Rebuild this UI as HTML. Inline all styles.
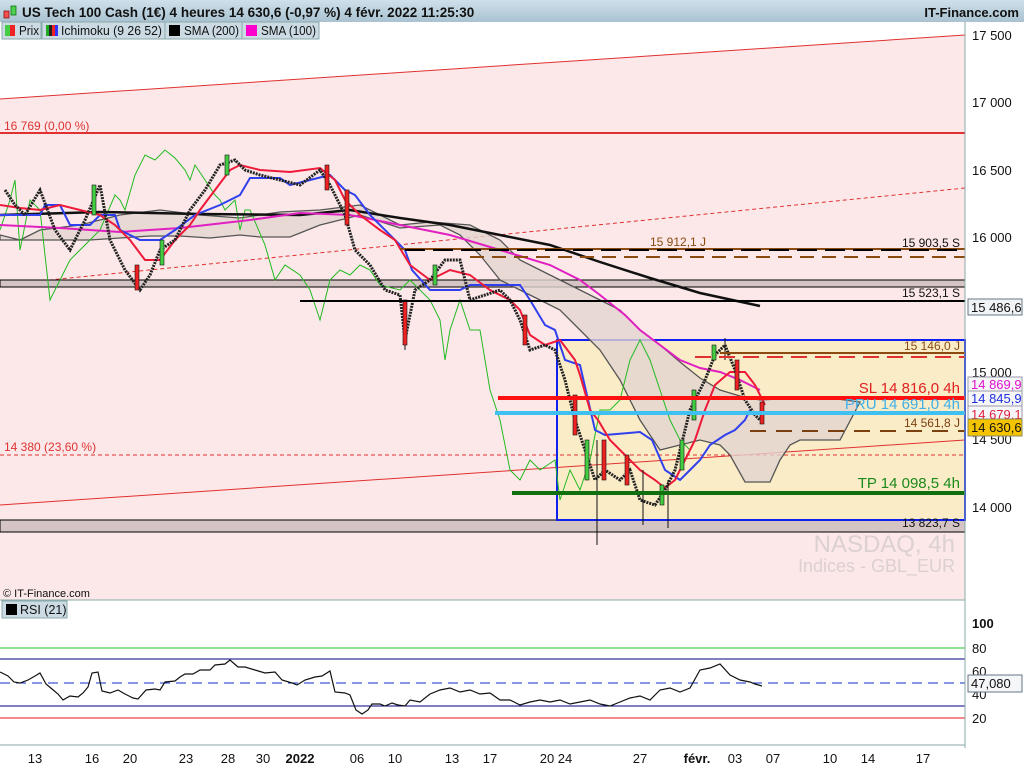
<!DOCTYPE html>
<html><head><meta charset="utf-8"><style>
body{margin:0;width:1024px;height:768px;overflow:hidden;background:#fff;font-family:"Liberation Sans",sans-serif}
svg{display:block}
text{font-family:"Liberation Sans",sans-serif}
</style></head><body>
<svg width="1024" height="768" viewBox="0 0 1024 768" xmlns="http://www.w3.org/2000/svg">
<defs><linearGradient id="hd" x1="0" y1="0" x2="0" y2="1"><stop offset="0" stop-color="#cfe0ea"/><stop offset="1" stop-color="#a9c2d1"/></linearGradient></defs>
<rect x="0" y="0" width="1024" height="22" fill="url(#hd)"/>
<rect x="4" y="11" width="5" height="7" fill="#f05050" stroke="#800" stroke-width="0.7"/>
<rect x="11" y="6" width="5" height="9" fill="#50d050" stroke="#060" stroke-width="0.7"/>
<text x="22" y="17" font-size="13.5" font-weight="bold" fill="#111">US Tech 100 Cash (1€) 4 heures 14 630,6 (-0,97 %) 4 févr. 2022 11:25:30</text>
<text x="1019" y="17" font-size="13" font-weight="bold" fill="#111" text-anchor="end">IT-Finance.com</text>
<rect x="0" y="22" width="965" height="578" fill="#fce8e8"/>
<polygon points="0,22 965,22 965,35 0,99" fill="#fff"/>
<rect x="557" y="340" width="408" height="180" fill="#fbecc8"/>
<g font-size="12.5" fill="#111">
<rect x="2" y="22" width="39" height="17" fill="#ccdbe3" stroke="#8aa"/>
<rect x="5" y="25" width="5" height="11" fill="#44cc44"/><rect x="10" y="25" width="5" height="11" fill="#ee2222"/><text x="19" y="35" textLength="20" lengthAdjust="spacingAndGlyphs">Prix</text>
<rect x="42" y="22" width="123" height="17" fill="#ccdbe3" stroke="#8aa"/>
<rect x="46" y="25" width="3" height="11" fill="#2a2"/><rect x="49" y="25" width="3" height="11" fill="#222"/><rect x="52" y="25" width="3" height="11" fill="#e22"/><rect x="55" y="25" width="3" height="11" fill="#33f"/><text x="61" y="35" textLength="101" lengthAdjust="spacingAndGlyphs">Ichimoku (9 26 52)</text>
<rect x="165" y="22" width="77" height="17" fill="#ccdbe3" stroke="#8aa"/>
<rect x="169" y="25" width="11" height="11" fill="#000"/><text x="184" y="35" textLength="55" lengthAdjust="spacingAndGlyphs">SMA (200)</text>
<rect x="242" y="22" width="77" height="17" fill="#ccdbe3" stroke="#8aa"/>
<rect x="246" y="25" width="11" height="11" fill="#f0c"/><text x="261" y="35" textLength="55" lengthAdjust="spacingAndGlyphs">SMA (100)</text>
</g>
<line x1="0" y1="99" x2="965" y2="35" stroke="#e03030"/>
<line x1="0" y1="505" x2="965" y2="440" stroke="#e03030"/>
<line x1="0" y1="285" x2="965" y2="188" stroke="#e03030" stroke-dasharray="4,3"/>
<line x1="0" y1="133" x2="965" y2="133" stroke="#e03030" stroke-width="2"/>
<text x="4" y="130" font-size="12" fill="#d33">16 769 (0,00 %)</text>
<line x1="0" y1="455" x2="965" y2="455" stroke="#e03030" stroke-dasharray="4,3"/>
<text x="4" y="451" font-size="12" fill="#d33">14 380 (23,60 %)</text>
<rect x="0" y="280" width="965" height="7" fill="#d4c4c4" stroke="#000" stroke-width="1"/>
<rect x="0" y="520" width="965" height="12" fill="#d4c4c4" stroke="#000" stroke-width="1"/>
<rect x="557" y="340" width="408" height="180" fill="none" stroke="#1020ee" stroke-width="2"/>
<polygon points="0,235 20,240 40,230 80,225 120,215 160,210 200,215 240,218 280,212 320,210 360,205 400,225 430,222 470,225 500,240 520,260 540,270 560,280 580,290 600,300 620,310 640,330 660,345 680,362 700,378 720,390 740,396 760,400 800,398 830,398 860,402 840,440 800,440 790,445 780,460 770,482 745,482 730,455 720,445 700,440 680,445 660,450 640,420 620,380 600,350 580,330 560,310 540,300 520,290 500,280 480,255 460,235 440,225 400,228 360,215 320,225 290,237 260,237 240,235 210,238 180,236 150,236 120,238 90,240 60,240 30,240 0,240" fill="#e2d4d0" fill-opacity="0.8" stroke="#555" stroke-width="1.3"/>
<polyline fill="none" stroke="#22bb22" stroke-width="1" points="0,230 10,200 15,180 20,250 30,200 40,210 50,300 60,280 70,260 80,250 100,230 115,195 120,200 125,210 135,175 145,155 155,160 165,150 175,158 185,170 190,180 195,165 205,180 215,195 220,200 225,210 235,200 240,230 245,210 250,210 265,245 275,280 285,265 300,275 310,290 320,320 325,300 330,280 340,270 350,275 360,265 370,270 380,285 400,290 410,280 420,290 430,300 440,320 445,360 450,330 460,300 470,330 480,330 490,390 500,420 510,470 520,480 530,460 540,470 555,460 560,500 570,470 580,490 590,460 600,410 610,410 620,400 630,360 640,340 650,360 660,390 670,420 680,440 690,450"/>
<polyline fill="none" stroke="#111" stroke-width="2.5" points="0,215 100,212 200,214 300,215 350,210 400,218 450,225 500,235 550,245 600,262 650,278 700,293 760,306"/>
<polyline fill="none" stroke="#e020c0" stroke-width="2" points="0,225 60,228 120,232 180,228 250,220 300,213 350,215 400,225 450,235 500,250 550,265 580,280 600,295 625,315 640,330 660,345 680,360 700,368 720,372 740,380 760,390"/>
<polyline fill="none" stroke="#3040ee" stroke-width="2" points="0,215 40,215 45,205 60,205 70,225 90,225 100,215 115,215 120,230 140,240 160,240 175,230 195,215 220,205 240,195 250,178 280,178 290,185 330,175 345,190 355,195 370,215 380,225 395,240 405,250 412,270 430,290 460,290 470,285 500,285 520,285 530,300 545,325 555,330 565,360 580,365 595,430 605,435 640,432 652,440 665,470 680,480 690,470 700,460 710,445 725,435 735,430 745,420 750,410"/>
<polyline fill="none" stroke="#ee1a3a" stroke-width="2" points="0,205 20,208 40,210 60,205 80,210 100,215 115,225 130,240 145,260 160,260 175,240 190,225 200,210 215,190 230,170 240,165 260,170 290,172 320,168 335,180 345,200 360,215 380,230 395,240 410,265 430,280 450,270 470,275 490,290 510,300 520,310 530,335 545,345 560,340 575,360 580,375 590,410 598,420 610,440 625,455 640,470 655,480 665,488 675,480 685,460 695,440 705,410 715,385 730,372 745,372 755,385 765,405"/>
<polyline fill="none" stroke="#222" stroke-width="3" stroke-dasharray="2,1" points="5,190 15,205 25,215 40,190 55,230 70,250 85,220 100,185 110,240 125,270 140,290 150,275 160,250 175,240 190,210 205,190 220,165 235,160 245,170 260,175 280,180 300,185 320,170 330,185 345,215 355,250 370,265 385,290 400,295 405,340 415,290 430,280 445,260 460,260 470,300 485,295 500,290 510,300 520,320 530,350 545,345 555,350 565,380 575,420 585,450 595,480 605,470 620,480 630,470 640,500 655,505 665,490 675,470 690,410 705,380 715,355 725,345 735,370 745,400 755,415 760,420"/>
<g stroke="#111" stroke-width="1">
<line x1="597" y1="440" x2="597" y2="545"/><line x1="643" y1="470" x2="643" y2="525"/><line x1="668" y1="480" x2="668" y2="528"/><line x1="405" y1="300" x2="405" y2="350"/><line x1="725" y1="338" x2="725" y2="360"/>
</g>
<g fill="#ee2222" stroke="#111" stroke-width="0.6">
<rect x="403" y="300" width="4" height="45"/><rect x="573" y="395" width="4" height="40"/><rect x="602" y="440" width="4" height="40"/><rect x="625" y="455" width="4" height="30"/><rect x="760" y="402" width="4" height="22"/><rect x="345" y="190" width="4" height="35"/><rect x="135" y="265" width="4" height="25"/><rect x="325" y="165" width="4" height="25"/><rect x="523" y="315" width="4" height="30"/><rect x="735" y="360" width="4" height="30"/>
</g>
<g fill="#44cc44" stroke="#111" stroke-width="0.6">
<rect x="92" y="185" width="4" height="30"/><rect x="225" y="155" width="4" height="20"/><rect x="585" y="440" width="4" height="40"/><rect x="660" y="485" width="4" height="20"/><rect x="692" y="390" width="4" height="30"/><rect x="712" y="345" width="4" height="15"/><rect x="160" y="240" width="4" height="25"/><rect x="433" y="265" width="4" height="20"/><rect x="680" y="440" width="4" height="30"/>
</g>
<line x1="400" y1="249" x2="965" y2="249" stroke="#8a4a10" stroke-width="2"/>
<line x1="405" y1="250" x2="965" y2="250" stroke="#000" stroke-width="2" stroke-dasharray="20,8"/>
<line x1="470" y1="257" x2="965" y2="257" stroke="#8a4a10" stroke-width="2" stroke-dasharray="14,8"/>
<text x="650" y="246" font-size="12" fill="#8a4a10">15 912,1 J</text>
<text x="960" y="247" font-size="12" fill="#111" text-anchor="end">15 903,5 S</text>
<line x1="300" y1="301" x2="965" y2="301" stroke="#000" stroke-width="2"/>
<text x="960" y="297" font-size="12" fill="#111" text-anchor="end">15 523,1 S</text>
<line x1="720" y1="353" x2="965" y2="353" stroke="#8a4a10" stroke-width="2"/>
<line x1="695" y1="357" x2="965" y2="357" stroke="#e03030" stroke-width="2" stroke-dasharray="16,8"/>
<text x="960" y="350" font-size="12" fill="#8a4a10" text-anchor="end">15 146,0 J</text>
<line x1="498" y1="398" x2="965" y2="398" stroke="#ff1010" stroke-width="4"/>
<text x="960" y="393" font-size="15" fill="#e02020" text-anchor="end">SL 14 816,0 4h</text>
<line x1="495" y1="413" x2="965" y2="413" stroke="#40c0f0" stroke-width="4"/>
<text x="960" y="409" font-size="15" fill="#40b0e8" text-anchor="end">PRU 14 691,0 4h</text>
<line x1="750" y1="431" x2="965" y2="431" stroke="#7a4010" stroke-width="2" stroke-dasharray="16,10"/>
<text x="960" y="427" font-size="12" fill="#7a4010" text-anchor="end">14 561,8 J</text>
<line x1="512" y1="493" x2="965" y2="493" stroke="#107010" stroke-width="4"/>
<text x="960" y="488" font-size="15" fill="#1a8a1a" text-anchor="end">TP 14 098,5 4h</text>
<text x="960" y="527" font-size="12" fill="#111" text-anchor="end">13 823,7 S</text>
<text x="955" y="552" font-size="24" fill="#dcd0d0" text-anchor="end">NASDAQ, 4h</text>
<text x="955" y="572" font-size="18" fill="#dcd0d0" text-anchor="end">Indices - GBL_EUR</text>
<text x="3" y="597" font-size="11" fill="#111">© IT-Finance.com</text>
<line x1="0" y1="600" x2="965" y2="600" stroke="#8aa" />
<rect x="2" y="601" width="65" height="17" fill="#ccdbe3" stroke="#8aa"/>
<rect x="6" y="604" width="11" height="11" fill="#000"/><text x="20" y="614" font-size="12.5" fill="#111">RSI (21)</text>
<line x1="0" y1="648" x2="965" y2="648" stroke="#20c020"/>
<line x1="0" y1="659" x2="965" y2="659" stroke="#000080"/>
<line x1="0" y1="683" x2="965" y2="683" stroke="#1030c0" stroke-dasharray="10,6"/>
<line x1="0" y1="706" x2="965" y2="706" stroke="#000080"/>
<line x1="0" y1="718" x2="965" y2="718" stroke="#ee1010"/>
<polyline fill="none" stroke="#111" stroke-width="1.2" points="0,672 8,676 14,682 20,683 28,680 35,676 40,673 46,684 52,689 58,694 63,700 70,696 78,697 83,693 88,687 92,673 98,672 102,691 110,693 118,690 125,694 133,698 138,699 146,690 155,689 160,690 165,682 175,681 180,677 185,674 193,674 200,670 210,670 215,665 225,664 230,660 238,667 245,667 255,670 265,673 275,672 282,680 292,683 297,685 305,680 315,677 322,676 330,671 335,692 345,693 350,695 356,710 362,714 368,710 372,704 380,704 385,706 392,703 398,705 405,706 410,700 420,702 430,694 440,690 450,688 460,692 470,690 480,694 490,693 500,700 510,700 520,705 530,702 540,700 550,702 560,700 570,704 580,702 590,700 600,704 610,706 620,702 630,698 640,696 650,700 660,690 670,688 680,692 690,688 700,670 710,668 720,664 730,675 740,680 750,682 755,684 762,686"/>
<line x1="0" y1="745" x2="965" y2="745" stroke="#8aa"/>
<g font-size="13" fill="#111" text-anchor="middle">
<text x="35" y="763">13</text><text x="92" y="763">16</text><text x="130" y="763">20</text><text x="186" y="763">23</text><text x="228" y="763">28</text><text x="263" y="763">30</text><text x="300" y="763" font-weight="bold">2022</text><text x="357" y="763">06</text><text x="395" y="763">10</text><text x="452" y="763">13</text><text x="490" y="763">17</text><text x="547" y="763">20</text><text x="565" y="763">24</text><text x="640" y="763">27</text><text x="697" y="763" font-weight="bold">févr.</text><text x="735" y="763">03</text><text x="773" y="763">07</text><text x="830" y="763">10</text><text x="868" y="763">14</text><text x="923" y="763">17</text>
</g>
<line x1="965" y1="22" x2="965" y2="748" stroke="#8aa"/>
<g font-size="13" fill="#111">
<text x="972" y="40">17 500</text><text x="972" y="107">17 000</text><text x="972" y="175">16 500</text><text x="972" y="242">16 000</text><text x="972" y="377">15 000</text><text x="972" y="444">14 500</text><text x="972" y="512">14 000</text>
<text x="972" y="628" font-weight="bold">100</text><text x="972" y="653">80</text><text x="972" y="676">60</text><text x="972" y="699">40</text><text x="972" y="723">20</text>
</g>
<rect x="968" y="299" width="54" height="16" fill="#f0f4f6" stroke="#678"/><text x="971" y="312" font-size="13" fill="#111">15 486,6</text>
<rect x="968" y="377" width="54" height="15" fill="#f6f6f8" stroke="#99a"/><text x="971" y="389" font-size="13" fill="#e010d0">14 869,9</text>
<rect x="968" y="391" width="54" height="15" fill="#f6f6f8" stroke="#99a"/><text x="971" y="403" font-size="13" fill="#2030e0">14 845,9</text>
<rect x="968" y="406" width="54" height="14" fill="#f6f6f8" stroke="#99a"/><text x="971" y="419" font-size="13" fill="#e02040">14 679,1</text>
<rect x="968" y="419" width="54" height="17" fill="#f5c400" stroke="#886"/><text x="971" y="432" font-size="13" fill="#111">14 630,6</text>
<rect x="968" y="675" width="54" height="17" fill="#f4f6f8" stroke="#678"/><text x="971" y="688" font-size="13" fill="#111">47,080</text>
</svg>
</body></html>
